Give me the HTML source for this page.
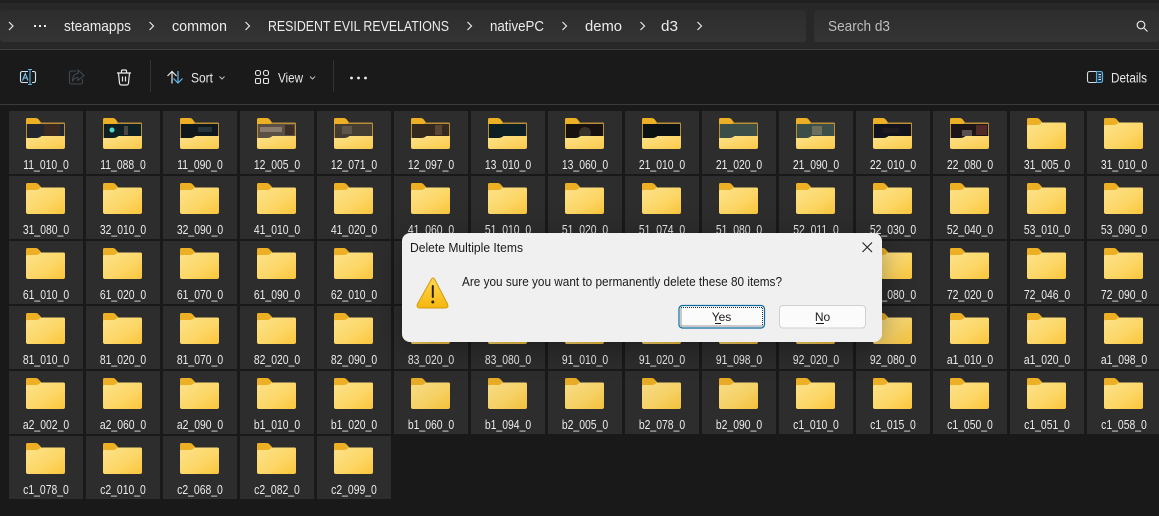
<!DOCTYPE html>
<html lang="en"><head><meta charset="utf-8"><title>Delete Multiple Items</title>
<style>
html,body{margin:0;padding:0;background:#191919;width:1159px;height:516px;overflow:hidden}
body{position:relative;font-family:"Liberation Sans",sans-serif}
#chrome{position:absolute;left:0;top:0;filter:blur(.25px)}
#grid{position:absolute;left:9px;top:111px;display:grid;grid-template-columns:repeat(15,74px);grid-auto-rows:63px;column-gap:3px;row-gap:2px;filter:blur(.3px)}
.t{position:relative;background:#2d2d2d;height:63px}
.t svg{position:absolute;left:17px;top:7px;width:39px;height:31px;display:block}
.t.d svg{opacity:.97}
.t b{position:absolute;left:-10px;right:-10px;top:46px;text-align:center;font:400 13px/16px "Liberation Sans",sans-serif;color:#ececec;transform:scaleX(.8)}
#dlg{position:absolute;left:402px;top:233px;width:480px;height:109px;background:#f0f0f0;border-radius:8px;box-shadow:0 6px 30px rgba(0,0,0,.35)}
#dlg svg{position:absolute;left:0;top:0}
</style></head><body>
<svg width="0" height="0" style="position:absolute">
<defs>
<linearGradient id="g1" x1="0" y1="0" x2="1" y2="1"><stop offset="0" stop-color="#fde28a"/><stop offset=".55" stop-color="#fcd768"/><stop offset="1" stop-color="#fbc53a"/></linearGradient>
<linearGradient id="g2" x1="0" y1="0" x2="1" y2="1"><stop offset="0" stop-color="#fde28a"/><stop offset="1" stop-color="#fbc94a"/></linearGradient>
<linearGradient id="w" x1="0" y1="0" x2="0" y2="1"><stop offset="0" stop-color="#ffd84f"/><stop offset="1" stop-color="#f6b70f"/></linearGradient>
<symbol id="f" viewBox="0 0 39 31">
<path d="M1.500 0H9.500q2 0 3 1.200L15 4v6H0V1.500Q0 0 1.500 0z" fill="#edb025"/>
<path d="M0 8.500Q0 7 1.500 7H10q2 0 3.500-1.300L14.500 4.500H37.500Q39 4.500 39 6V29Q39 31 37 31H2Q0 31 0 29z" fill="url(#g1)"/>
</symbol>
<symbol id="b" viewBox="0 0 39 31">
<path d="M1.500 0H9.500q2 0 3 1.200L15 4.500h22.500Q39 4.500 39 6V25H0V1.500Q0 0 1.500 0z" fill="#edb025"/>
<path d="M0 6H13L15 4.500H37.500Q39 4.500 39 6V25H0z" fill="#b98e36"/>
</symbol>
<symbol id="c" viewBox="0 0 39 31">
<path d="M0 20H11q2 0 3.500-1.200L15.500 18H39V29Q39 31 37 31H2Q0 31 0 29z" fill="url(#g2)"/>
</symbol>
</defs>
</svg>

<svg id="chrome" width="1159" height="516" viewBox="0 0 1159 516" font-family="Liberation Sans, sans-serif">
<defs><linearGradient id="bar" x1="0" y1="0" x2="0" y2="1"><stop offset="0" stop-color="#2d2d2d"/><stop offset="1" stop-color="#343434"/></linearGradient></defs>
<rect width="1159" height="50" fill="#282828"/>
<rect width="1159" height="3" fill="#202020"/>
<rect y="10" width="806" height="32" rx="3" fill="url(#bar)"/>
<rect x="814" y="10" width="345" height="32" rx="3" fill="url(#bar)"/>
<rect y="49" width="1159" height="1" fill="#3e3e3e"/>
<rect y="50" width="1159" height="54" fill="#1a1a1a"/>
<rect y="104" width="1159" height="1" fill="#3a3a3a"/>
<g fill="none" stroke="#e8e8e8" stroke-width="1.200">
<path d="M9 22l4 4-4 4M149.500 22l4 4-4 4M245.500 22l4 4-4 4M467.500 22l4 4-4 4M562.500 22l4 4-4 4M640.500 22l4 4-4 4M697.500 22l4 4-4 4"/>
</g>
<g fill="#eee"><rect x="34" y="25" width="2" height="2"/><rect x="39" y="25" width="2" height="2"/><rect x="44" y="25" width="2" height="2"/></g>
<g fill="#ececec" font-size="14.500">
<text x="64" y="31" textLength="67" lengthAdjust="spacingAndGlyphs">steamapps</text>
<text x="172" y="31" textLength="55" lengthAdjust="spacingAndGlyphs">common</text>
<text x="268" y="31" textLength="181" lengthAdjust="spacingAndGlyphs">RESIDENT EVIL REVELATIONS</text>
<text x="490" y="31" textLength="54" lengthAdjust="spacingAndGlyphs">nativePC</text>
<text x="585" y="31" textLength="37" lengthAdjust="spacingAndGlyphs">demo</text>
<text x="661" y="31" textLength="17" lengthAdjust="spacingAndGlyphs">d3</text>
</g>
<text x="828" y="31" fill="#bdbdbd" font-size="14.500" textLength="62" lengthAdjust="spacingAndGlyphs">Search d3</text>
<g fill="none" stroke="#e6e6e6" stroke-width="1.200"><circle cx="1141" cy="25" r="3.800"/><path d="M1144 28l3.500 3.500"/></g>

<!-- rename -->
<g fill="none" stroke-width="1.100">
<path d="M28 71.500H22.500Q20.500 71.500 20.500 73.500V80.500Q20.500 82.500 22.500 82.500H28M32 71.500H34Q35.500 71.500 35.500 73.500V80.500Q35.500 82.500 34 82.500H32" stroke="#cfe3f2"/>
<path d="M28 69.500H32M30 69.500V84.500M28 84.500H32" stroke="#5db4e6"/>
<path d="M22.500 80.500L25.300 73.500L28 80.500M23.500 78H27" stroke="#7cc3ee"/>
</g>
<!-- share -->
<g fill="none" stroke="#3f4a54" stroke-width="1.100">
<path d="M76 71H71.500Q69.500 71 69.500 73V82Q69.500 84 71.500 84H80.500Q82.500 84 82.500 82V79"/>
<path d="M78 70L84 75.500L78 80.500V77.500Q74 77.500 72.500 81.500Q72.500 73.800 78 73.500z"/>
</g>
<!-- trash -->
<g fill="none" stroke="#ececec" stroke-width="1.200">
<path d="M117 73H131M121.500 73V71Q121.500 70 122.500 70H125.500Q126.500 70 126.500 71V73M118.500 73L119.500 83Q119.700 85 121.500 85H126.500Q128.300 85 128.500 83L129.500 73M122.500 76.500V81.500M125.500 76.500V81.500"/>
</g>
<rect x="150" y="60" width="1" height="32" fill="#333"/>
<!-- sort -->
<g fill="none" stroke-width="1.200">
<path d="M172 83.500V71.500M167.500 76L172 71.500L176.500 76" stroke="#e8e8e8"/>
<path d="M178 71V83M173.500 78.500L178 83L182.500 78.500" stroke="#62b6ea"/>
</g>
<text x="191" y="82.500" fill="#e8e8e8" font-size="13.500" textLength="22" lengthAdjust="spacingAndGlyphs">Sort</text>
<path d="M219.500 76.500L222 79L224.500 76.500" fill="none" stroke="#bbb" stroke-width="1"/>
<!-- view -->
<g fill="none" stroke="#e6e6e6" stroke-width="1.100">
<rect x="255.500" y="70.500" width="5" height="5" rx="2"/><rect x="263.500" y="70.500" width="5" height="5" rx="2"/>
<rect x="255.500" y="78.500" width="5" height="5" rx="1.200"/><rect x="263.500" y="78.500" width="5" height="5" rx="1.200"/>
</g>
<text x="278" y="82.500" fill="#e8e8e8" font-size="13.500" textLength="25" lengthAdjust="spacingAndGlyphs">View</text>
<path d="M310 76.500L312.500 79L315 76.500" fill="none" stroke="#bbb" stroke-width="1"/>
<rect x="333" y="60" width="1" height="32" fill="#333"/>
<g fill="#f0f0f0"><circle cx="351.500" cy="78" r="1.400"/><circle cx="358.500" cy="78" r="1.400"/><circle cx="365.500" cy="78" r="1.400"/></g>
<!-- details -->
<rect x="1087.500" y="71.500" width="15" height="11" rx="2" fill="none" stroke="#d5dde3" stroke-width="1.100"/>
<path d="M1096.500 71.500H1100.500Q1102.500 71.500 1102.500 73.500V80.500Q1102.500 82.500 1100.500 82.500H1096.500z" fill="#1d3a4d" stroke="#58aee0" stroke-width="1.100"/>
<path d="M1098.500 74.500H1101M1098.500 77H1101M1098.500 79.500H1101" stroke="#d5e8f3" stroke-width=".9"/>
<text x="1111" y="82.500" fill="#e8e8e8" font-size="13.500" textLength="36" lengthAdjust="spacingAndGlyphs">Details</text>
</svg>

<div id="grid">
<div class="t"><svg><use href="#b"/><rect x="1" y="6" width="37" height="14" fill="#23262d"/><rect x="18" y="6" width="16" height="12" fill="#3a2a22"/><use href="#c"/></svg><b>11_010_0</b></div>
<div class="t"><svg><use href="#b"/><rect x="1" y="6" width="37" height="14" fill="#0f2024"/><circle cx="9" cy="12" r="2.500" fill="#4fd8d0"/><rect x="21" y="8" width="4" height="9" fill="#4a4640"/><use href="#c"/></svg><b>11_088_0</b></div>
<div class="t"><svg><use href="#b"/><rect x="1" y="6" width="37" height="14" fill="#11181b"/><rect x="18" y="9" width="14" height="5" fill="#26333a"/><use href="#c"/></svg><b>11_090_0</b></div>
<div class="t"><svg><use href="#b"/><rect x="1" y="6" width="37" height="14" fill="#5b5045"/><rect x="3" y="9" width="22" height="5" fill="#8a7d6d"/><rect x="28" y="7" width="9" height="10" fill="#3d2f28"/><use href="#c"/></svg><b>12_005_0</b></div>
<div class="t"><svg><use href="#b"/><rect x="1" y="6" width="37" height="14" fill="#453c32"/><rect x="8" y="8" width="10" height="8" fill="#5f564a"/><use href="#c"/></svg><b>12_071_0</b></div>
<div class="t"><svg><use href="#b"/><rect x="1" y="6" width="37" height="14" fill="#33291f"/><rect x="24" y="7" width="7" height="10" fill="#5a4433"/><use href="#c"/></svg><b>12_097_0</b></div>
<div class="t"><svg><use href="#b"/><rect x="1" y="6" width="37" height="14" fill="#0f2024"/><use href="#c"/></svg><b>13_010_0</b></div>
<div class="t"><svg><use href="#b"/><rect x="1" y="6" width="37" height="14" fill="#17120f"/><circle cx="20" cy="15" r="6" fill="#3a302a"/><use href="#c"/></svg><b>13_060_0</b></div>
<div class="t"><svg><use href="#b"/><rect x="1" y="6" width="37" height="14" fill="#0c1214"/><use href="#c"/></svg><b>21_010_0</b></div>
<div class="t"><svg><use href="#b"/><rect x="1" y="6" width="37" height="14" fill="#3c4e48"/><use href="#c"/></svg><b>21_020_0</b></div>
<div class="t"><svg><use href="#b"/><rect x="1" y="6" width="37" height="14" fill="#3c4e48"/><rect x="16" y="8" width="10" height="9" fill="#6b6f5c"/><use href="#c"/></svg><b>21_090_0</b></div>
<div class="t"><svg><use href="#b"/><rect x="1" y="6" width="37" height="14" fill="#12131c"/><rect x="10" y="10" width="16" height="5" fill="#1f1a20"/><use href="#c"/></svg><b>22_010_0</b></div>
<div class="t"><svg><use href="#b"/><rect x="1" y="6" width="37" height="14" fill="#1d1518"/><rect x="26" y="7" width="11" height="10" fill="#4f2a26"/><rect x="12" y="12" width="10" height="6" fill="#5a5050"/><use href="#c"/></svg><b>22_080_0</b></div>
<div class="t"><svg><use href="#f"/></svg><b>31_005_0</b></div>
<div class="t"><svg><use href="#f"/></svg><b>31_010_0</b></div>

<div class="t"><svg><use href="#f"/></svg><b>31_080_0</b></div>
<div class="t"><svg><use href="#f"/></svg><b>32_010_0</b></div>
<div class="t"><svg><use href="#f"/></svg><b>32_090_0</b></div>
<div class="t"><svg><use href="#f"/></svg><b>41_010_0</b></div>
<div class="t"><svg><use href="#f"/></svg><b>41_020_0</b></div>
<div class="t"><svg><use href="#f"/></svg><b>41_060_0</b></div>
<div class="t"><svg><use href="#f"/></svg><b>51_010_0</b></div>
<div class="t"><svg><use href="#f"/></svg><b>51_020_0</b></div>
<div class="t"><svg><use href="#f"/></svg><b>51_074_0</b></div>
<div class="t"><svg><use href="#f"/></svg><b>51_080_0</b></div>
<div class="t"><svg><use href="#f"/></svg><b>52_011_0</b></div>
<div class="t"><svg><use href="#f"/></svg><b>52_030_0</b></div>
<div class="t"><svg><use href="#f"/></svg><b>52_040_0</b></div>
<div class="t"><svg><use href="#f"/></svg><b>53_010_0</b></div>
<div class="t"><svg><use href="#f"/></svg><b>53_090_0</b></div>

<div class="t"><svg><use href="#f"/></svg><b>61_010_0</b></div>
<div class="t"><svg><use href="#f"/></svg><b>61_020_0</b></div>
<div class="t"><svg><use href="#f"/></svg><b>61_070_0</b></div>
<div class="t"><svg><use href="#f"/></svg><b>61_090_0</b></div>
<div class="t"><svg><use href="#f"/></svg><b>62_010_0</b></div>
<div class="t"></div><div class="t"></div><div class="t"></div><div class="t"></div><div class="t"></div><div class="t"></div>
<div class="t"><svg><use href="#f"/></svg><b>71_080_0</b></div>
<div class="t"><svg><use href="#f"/></svg><b>72_020_0</b></div>
<div class="t"><svg><use href="#f"/></svg><b>72_046_0</b></div>
<div class="t"><svg><use href="#f"/></svg><b>72_090_0</b></div>

<div class="t"><svg><use href="#f"/></svg><b>81_010_0</b></div>
<div class="t"><svg><use href="#f"/></svg><b>81_020_0</b></div>
<div class="t"><svg><use href="#f"/></svg><b>81_070_0</b></div>
<div class="t"><svg><use href="#f"/></svg><b>82_020_0</b></div>
<div class="t"><svg><use href="#f"/></svg><b>82_090_0</b></div>
<div class="t"><svg><use href="#f"/></svg><b>83_020_0</b></div>
<div class="t"><svg><use href="#f"/></svg><b>83_080_0</b></div>
<div class="t"><svg><use href="#f"/></svg><b>91_010_0</b></div>
<div class="t"><svg><use href="#f"/></svg><b>91_020_0</b></div>
<div class="t"><svg><use href="#f"/></svg><b>91_098_0</b></div>
<div class="t"><svg><use href="#f"/></svg><b>92_020_0</b></div>
<div class="t d"><svg><use href="#f"/></svg><b>92_080_0</b></div>
<div class="t"><svg><use href="#f"/></svg><b>a1_010_0</b></div>
<div class="t"><svg><use href="#f"/></svg><b>a1_020_0</b></div>
<div class="t"><svg><use href="#f"/></svg><b>a1_098_0</b></div>

<div class="t"><svg><use href="#f"/></svg><b>a2_002_0</b></div>
<div class="t"><svg><use href="#f"/></svg><b>a2_060_0</b></div>
<div class="t"><svg><use href="#f"/></svg><b>a2_090_0</b></div>
<div class="t"><svg><use href="#f"/></svg><b>b1_010_0</b></div>
<div class="t"><svg><use href="#f"/></svg><b>b1_020_0</b></div>
<div class="t d"><svg><use href="#f"/></svg><b>b1_060_0</b></div>
<div class="t d"><svg><use href="#f"/></svg><b>b1_094_0</b></div>
<div class="t d"><svg><use href="#f"/></svg><b>b2_005_0</b></div>
<div class="t d"><svg><use href="#f"/></svg><b>b2_078_0</b></div>
<div class="t d"><svg><use href="#f"/></svg><b>b2_090_0</b></div>
<div class="t"><svg><use href="#f"/></svg><b>c1_010_0</b></div>
<div class="t"><svg><use href="#f"/></svg><b>c1_015_0</b></div>
<div class="t"><svg><use href="#f"/></svg><b>c1_050_0</b></div>
<div class="t"><svg><use href="#f"/></svg><b>c1_051_0</b></div>
<div class="t"><svg><use href="#f"/></svg><b>c1_058_0</b></div>

<div class="t"><svg><use href="#f"/></svg><b>c1_078_0</b></div>
<div class="t"><svg><use href="#f"/></svg><b>c2_010_0</b></div>
<div class="t"><svg><use href="#f"/></svg><b>c2_068_0</b></div>
<div class="t"><svg><use href="#f"/></svg><b>c2_082_0</b></div>
<div class="t"><svg><use href="#f"/></svg><b>c2_099_0</b></div>
</div>

<div id="dlg">
<svg width="480" height="109" viewBox="0 0 480 109" font-family="Liberation Sans, sans-serif">
<text x="8" y="19" fill="#1a1a1a" font-size="12.500" textLength="113" lengthAdjust="spacingAndGlyphs">Delete Multiple Items</text>
<path d="M460.500 9.500L470 19M470 9.500L460.500 19" stroke="#222" stroke-width="1.100" fill="none"/>
<path d="M29.500 46Q31 44 32.500 46L45.500 71Q47 75 43 75H18Q14 75 15.500 71z" fill="url(#w)" stroke="#d49b10" stroke-width="1"/>
<rect x="29.800" y="52" width="2" height="13" rx="1" fill="#2a2210"/>
<circle cx="30.800" cy="69" r="1.500" fill="#2a2210"/>
<text x="60" y="53" fill="#1a1a1a" font-size="12.500" textLength="320" lengthAdjust="spacingAndGlyphs">Are you sure you want to permanently delete these 80 items?</text>
<rect x="277" y="72.500" width="85.500" height="22.500" rx="3.500" fill="#fbfbfb" stroke="#0f6a9f" stroke-width="1.200"/>
<rect x="279" y="74.500" width="81.500" height="18.500" fill="none" stroke="#333" stroke-width="1" stroke-dasharray="1 1"/>
<text x="319.500" y="88" text-anchor="middle" fill="#1a1a1a" font-size="12">Yes</text>
<rect x="313" y="90" width="6" height="1" fill="#1a1a1a"/>
<rect x="377.500" y="72.500" width="86" height="22.500" rx="3.500" fill="#fbfbfb" stroke="#d0d0d0" stroke-width="1"/>
<text x="420.500" y="88" text-anchor="middle" fill="#1a1a1a" font-size="12">No</text>
<rect x="414" y="90" width="8" height="1" fill="#1a1a1a"/>
</svg>
</div>
</body></html>
